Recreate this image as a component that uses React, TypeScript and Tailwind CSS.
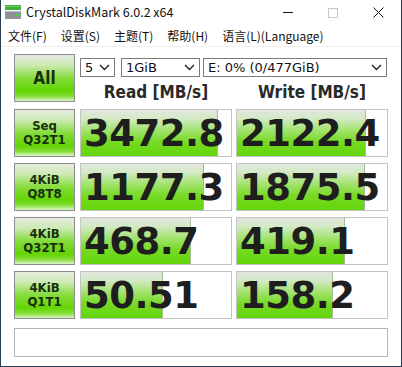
import React from 'react';

const rows = [
  { l1: 'Seq', l2: 'Q32T1', read: '3472.8', rw: 137, write: '2122.4', ww: 129 },
  { l1: '4KiB', l2: 'Q8T8', read: '1177.3', rw: 123, write: '1875.5', ww: 128 },
  { l1: '4KiB', l2: 'Q32T1', read: '468.7', rw: 110, write: '419.1', ww: 108 },
  { l1: '4KiB', l2: 'Q1T1', read: '50.51', rw: 82, write: '158.2', ww: 96 },
];

const uiFont = "font-['Noto_Sans_CJK_SC','Noto_Sans',sans-serif]";
const tahoma = "font-['DejaVu_Sans_Condensed','DejaVu_Sans',sans-serif]";

const Chevron = () => (
  <svg width="11" height="7" viewBox="0 0 11 7" className="shrink-0">
    <path d="M1 1 L5.5 5.5 L10 1" fill="none" stroke="#222" strokeWidth="1.4" />
  </svg>
);

const Select = ({ text, className }: { text: string; className: string }) => (
  <div className={`flex h-[19px] items-center justify-between border border-[#7a7a7a] bg-white pl-[4px] pr-[4px] ${className}`}>
    <span className="font-['DejaVu_Sans',sans-serif] text-[13px] leading-none text-[#111]">{text}</span>
    <Chevron />
  </div>
);

const LabelBox = ({ children }: { children: React.ReactNode }) => (
  <div className={`flex h-[48px] w-[61px] shrink-0 flex-col items-center justify-center border border-[#8c8c8c] bg-[linear-gradient(to_bottom,#e6ece0_0%,#cdeab4_22%,#86dc3c_50%,#62d404_78%,#86de3a_90%,#dcf6c8_100%)] ${tahoma} font-bold text-[#17300c]`}>
    {children}
  </div>
);

const ValueBox = ({ value, width }: { value: string; width: number }) => (
  <div className="grid h-[48px] w-[152px] shrink-0 overflow-hidden border border-[#c4c4c4] bg-white">
    <div
      className="col-start-1 row-start-1 h-full border-r border-[#a8bb98] bg-[linear-gradient(to_bottom,#e2e6de_0%,#d4eac6_18%,#a6e474_42%,#78da26_68%,#62d60a_100%)]"
      style={{ width }}
    />
    <span className="col-start-1 row-start-1 flex items-center whitespace-nowrap pl-[3px] font-['DejaVu_Sans',sans-serif] text-[37px] font-bold leading-none tracking-[-0.5px] text-[#1e1e1e]">
      {value}
    </span>
  </div>
);

export default function App() {
  return (
    <div className={`flex h-[367px] w-[402px] flex-col border-x border-b border-[#2a3c50] bg-white ${uiFont}`}>
      {/* title bar */}
      <div className="flex h-[25px] shrink-0 items-center">
        <svg width="16" height="15" viewBox="0 0 16 15" className="ml-[4px] mr-[5px]">
          <rect x="0" y="0" width="16" height="5" fill="#3fae3a" />
          <rect x="0" y="1" width="16" height="1" fill="#6fd060" />
          <rect x="0" y="6" width="16" height="8" fill="#8c9298" />
          <rect x="0" y="6" width="16" height="1" fill="#b6bbc0" />
          <rect x="11" y="9" width="3" height="2" fill="#4ed040" />
        </svg>
        <span className="text-[12.5px] text-[#111]">CrystalDiskMark 6.0.2 x64</span>
        <div className="ml-auto flex h-full items-center">
          <div className="flex w-[45px] justify-center">
            <div className="h-px w-[10px] bg-[#111]" />
          </div>
          <div className="flex w-[45px] justify-center">
            <div className="h-[10px] w-[10px] border border-[#c8c8c8]" />
          </div>
          <div className="flex w-[46px] justify-center">
            <svg width="11" height="11" viewBox="0 0 11 11">
              <path d="M0.5 0.5 L10.5 10.5 M10.5 0.5 L0.5 10.5" stroke="#111" strokeWidth="1" />
            </svg>
          </div>
        </div>
      </div>

      {/* menu bar */}
      <div className="flex h-[22px] shrink-0 items-center gap-[14px] border-b border-[#f0f0f0] pl-[7px] text-[12px] text-[#111]">
        <span>文件(F)</span>
        <span>设置(S)</span>
        <span>主题(T)</span>
        <span>帮助(H)</span>
        <span>语言(L)(Language)</span>
      </div>

      {/* content */}
      <div className="flex flex-col pl-[13px] pt-[7px]">
        <div className="flex h-[48px] gap-[5px]">
          <LabelBox>
            <span className="text-[17px] leading-none">All</span>
          </LabelBox>
          <div className="flex flex-col">
            <div className="mt-[4px] flex">
              <Select text="5" className="w-[35px]" />
              <Select text="1GiB" className="ml-[6px] w-[79px]" />
              <Select text="E: 0% (0/477GiB)" className="ml-[3px] w-[184px]" />
            </div>
            <div className="flex gap-[4px] pt-[4px]">
              <div className={`w-[152px] text-center ${tahoma} text-[17px] font-bold leading-[22px] text-[#2a2a2a]`}>Read [MB/s]</div>
              <div className={`w-[152px] text-center ${tahoma} text-[17px] font-bold leading-[22px] text-[#2a2a2a]`}>Write [MB/s]</div>
            </div>
          </div>
        </div>

        <div className="mt-[7px] flex flex-col gap-[6px]">
          {rows.map((r) => (
            <div key={r.l2 + r.read} className="flex">
              <LabelBox>
                <span className="text-[13px] leading-[14px]">{r.l1}</span>
                <span className="text-[13px] leading-[14px]">{r.l2}</span>
              </LabelBox>
              <div className="ml-[5px]">
                <ValueBox value={r.read} width={r.rw} />
              </div>
              <div className="ml-[4px]">
                <ValueBox value={r.write} width={r.ww} />
              </div>
            </div>
          ))}
        </div>

        <div className="mt-[9px] h-[29px] w-[374px] border border-[#b4b4b4] bg-white" />
      </div>
    </div>
  );
}
